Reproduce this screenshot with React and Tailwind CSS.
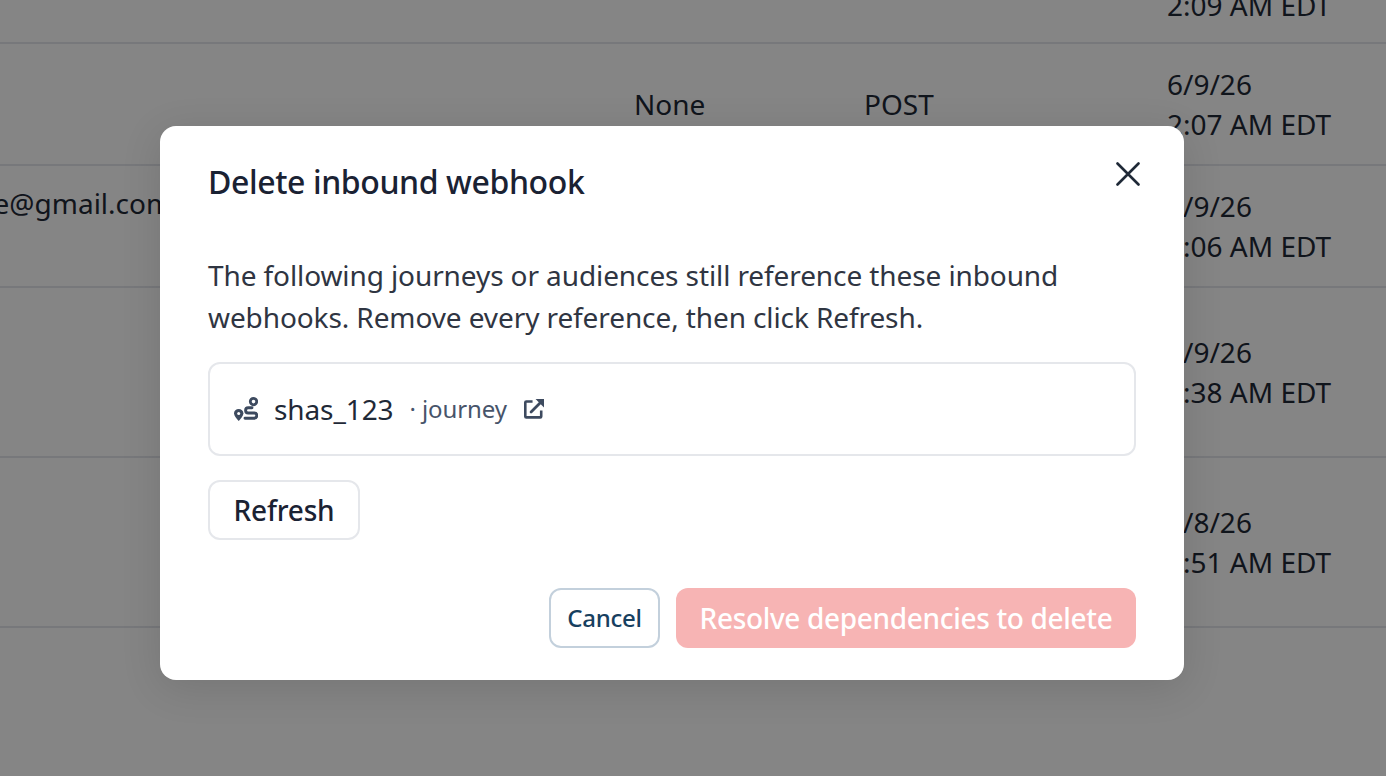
import React from 'react';

const rows = [
  { h: 'h-[44px]', date: ['', '2:09 AM EDT'], pull: true },
  { h: 'h-[122px]', to: 'None', method: 'POST', date: ['6/9/26', '2:07 AM EDT'] },
  { h: 'h-[122px]', email: 'someone@gmail.com', date: ['6/9/26', '2:06 AM EDT'] },
  { h: 'h-[170px]', date: ['6/9/26', '1:38 AM EDT'] },
  { h: 'h-[170px]', date: ['6/8/26', '1:51 AM EDT'] },
];

function JourneyIcon() {
  return (
    <svg width="24" height="24" viewBox="0 0 24 24" fill="none" className="text-[#3d4a5f] shrink-0">
      <path d="M4.700 12C2.100 12 0 13.900 0 16.300c0 2.700 2.700 5.600 4.700 7.700 2-2.100 4.700-5 4.700-7.700C9.400 13.900 7.300 12 4.700 12Z" fill="currentColor" />
      <circle cx="4.700" cy="16.400" r="1.500" fill="white" />
      <circle cx="19.500" cy="4.600" r="3.200" stroke="currentColor" strokeWidth="2.800" />
      <path d="M18 10.800h-3.800a2.600 2.600 0 0 0 0 5.200h6a2.600 2.600 0 0 1 0 5.200H11" stroke="currentColor" strokeWidth="2.900" strokeLinecap="round" />
    </svg>
  );
}

function OpenIcon() {
  return (
    <svg width="20" height="20" viewBox="0.9 1 20.100 20.100" fill="none" className="text-[#3d4a5f] shrink-0">
      <path d="M9.500 3.500H3.200a1 1 0 0 0-1 1v14a1 1 0 0 0 1 1h14a1 1 0 0 0 1-1v-6" stroke="currentColor" strokeWidth="2.600" />
      <path d="M8 14 18 4" stroke="currentColor" strokeWidth="2.800" strokeLinecap="round" />
      <path d="M12.500 1h8.500v8.500Z" fill="currentColor" />
    </svg>
  );
}

export default function App() {
  return (
    <div className="relative h-[776px] overflow-hidden bg-white font-['Noto_Sans',sans-serif] text-[28px] leading-[40px] text-[#1f2937]">
      {/* table behind the dialog */}
      <div className="flex flex-col">
        {rows.map((row, i) => (
          <div key={i} className={`${row.h} grid grid-cols-[634px_230px_303px_1fr] border-b-2 border-[#e5e7eb] ${row.pull ? 'items-start' : 'items-center'}`}>
            <div className="overflow-hidden whitespace-nowrap self-start mt-[17px]">
              {row.email && <span className="block ml-[-113px]">{row.email}</span>}
            </div>
            <div>{row.to}</div>
            <div>{row.method}</div>
            <div className={`whitespace-nowrap ${row.pull ? 'mt-[-55px]' : ''}`}>
              <div className="h-[40px]">{row.date[0]}</div>
              <div>{row.date[1]}</div>
            </div>
          </div>
        ))}
      </div>

      {/* overlay + dialog */}
      <div className="absolute inset-0 bg-black/[0.48] flex items-start pl-[160px] pt-[126px]">
        <div className="w-[1024px] h-[554px] bg-white rounded-[16px] shadow-[0_8px_40px_rgba(0,0,0,0.12)] pt-7 px-12 pb-8 flex flex-col">
          <div className="flex items-start justify-between">
            <h2 className="text-[32px] leading-[56px] font-medium tracking-[-0.4px] text-[#1a2233]">Delete inbound webhook</h2>
            <button className="mt-2 mr-[-4px]">
              <svg width="24" height="24" viewBox="0 0 24 24" fill="none" stroke="#1f2937" strokeWidth="2.600" strokeLinecap="round">
                <path d="M1.500 1.500 22.500 22.500M22.500 1.500 1.500 22.500" />
              </svg>
            </button>
          </div>

          <p className="mt-[44px] text-[28px] leading-[42px] tracking-[-0.1px] text-[#2f3542]">
            The following journeys or audiences still reference these inbound webhooks. Remove every reference, then click Refresh.
          </p>

          <div className="mt-6 h-[94px] rounded-[12px] border-2 border-[#e5e7eb] flex items-center pl-6 tracking-[-0.1px]">
            <JourneyIcon />
            <span className="ml-4 text-[28px] text-[#1f2937]">shas_123</span>
            <span className="ml-4 text-[24px] text-[#47546a]">· journey</span>
            <span className="ml-[17px]"><OpenIcon /></span>
          </div>

          <button className="mt-6 w-[152px] h-[60px] rounded-[12px] border-2 border-[#e5e7eb] text-[28px] font-medium tracking-[-0.2px] text-[#1a2233]">
            Refresh
          </button>

          <div className="mt-auto flex justify-end gap-4">
            <button className="w-[111px] h-[60px] rounded-[12px] border-2 border-[#c3d0dc] text-[24px] font-medium tracking-[-0.3px] text-[#17405f]">
              Cancel
            </button>
            <button className="w-[460px] h-[60px] rounded-[12px] bg-[#f7b4b4] text-[28px] font-medium tracking-[-0.33px] text-white">
              Resolve dependencies to delete
            </button>
          </div>
        </div>
      </div>
    </div>
  );
}
